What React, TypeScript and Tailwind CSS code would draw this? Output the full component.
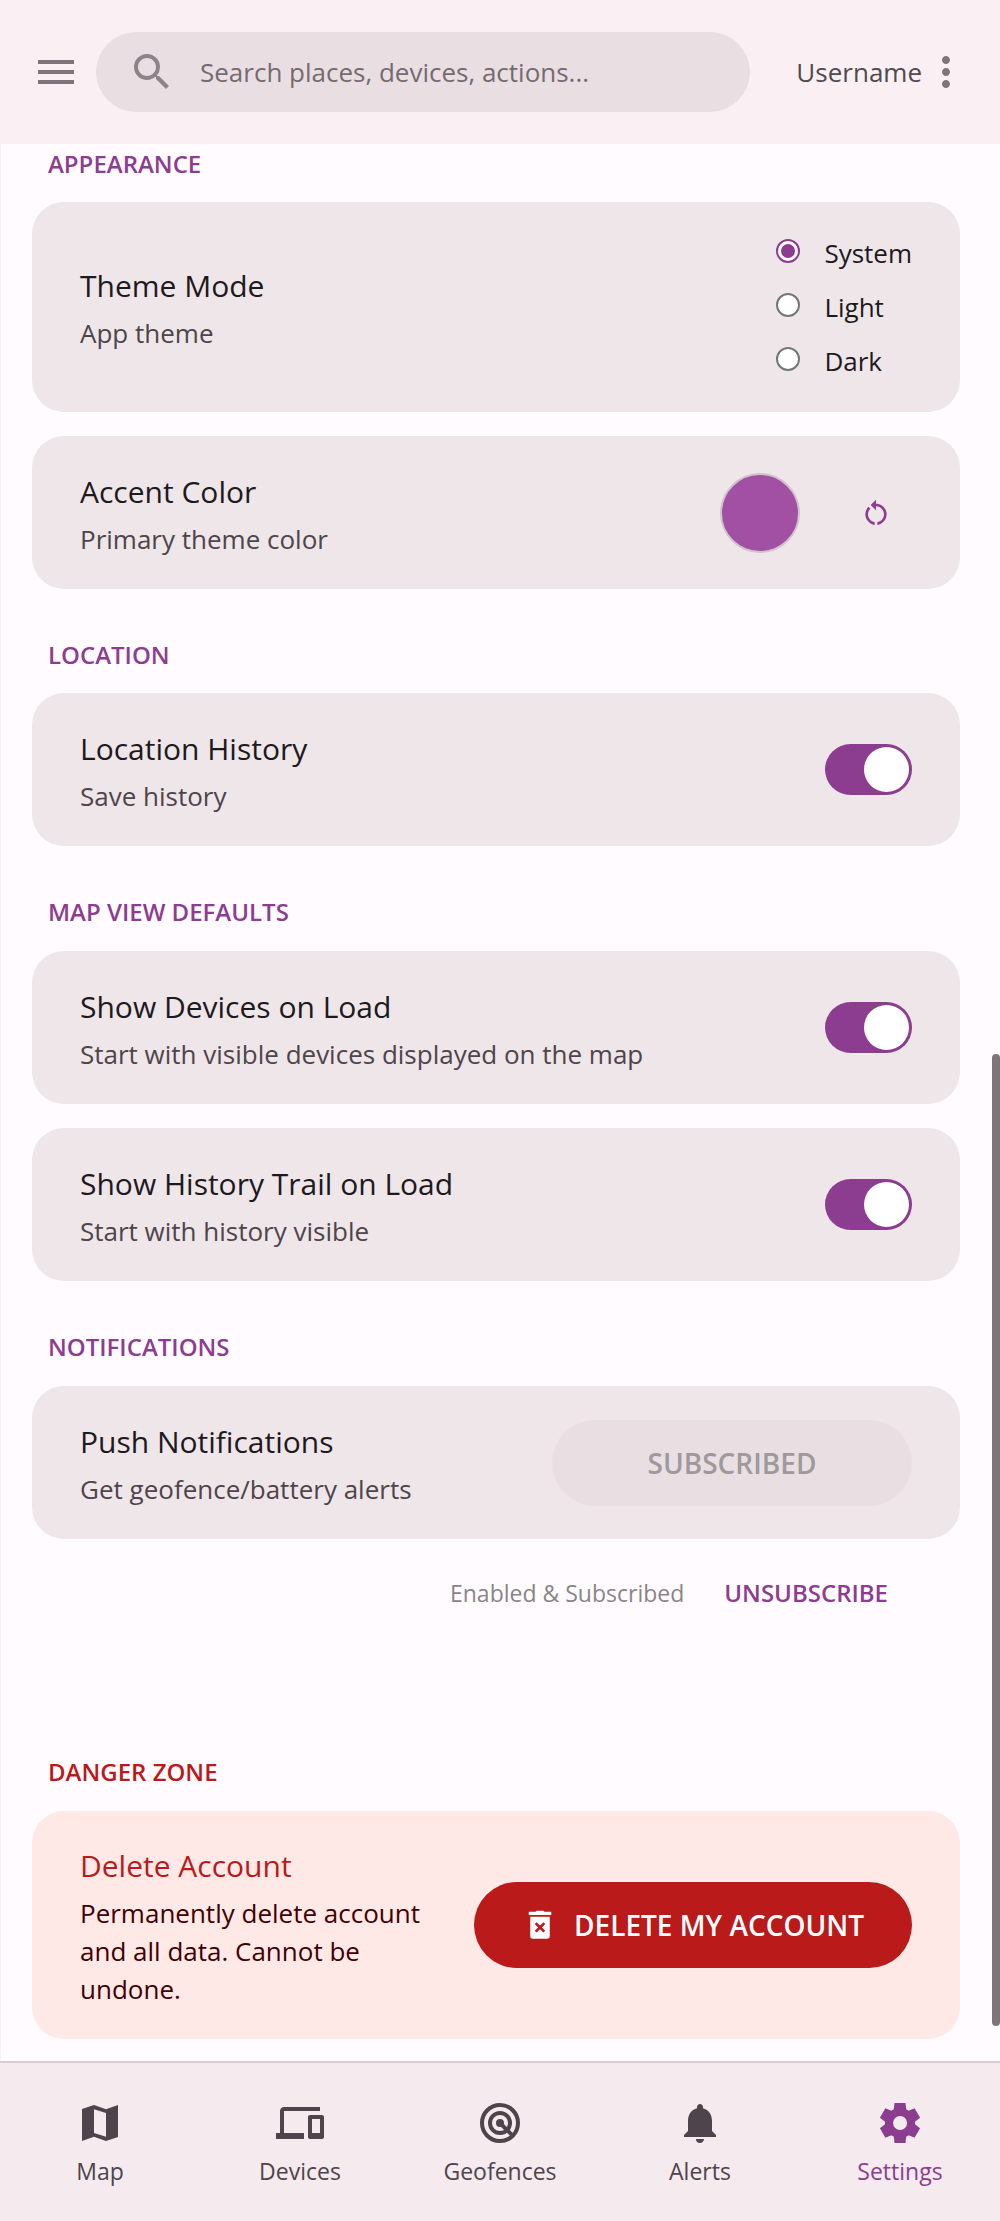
import { useState } from "react";
import type { ReactNode } from "react";
import { MdMenu, MdSearch, MdMoreVert, MdRestartAlt, MdDevices, MdNotifications } from "react-icons/md";

type IconProps = { className?: string };

function MapIcon({ className }: IconProps) {
  return (
    <svg viewBox="0 0 24 24" className={className} fill="currentColor" aria-hidden="true">
      <path fillRule="evenodd" d="M3 21V5l6-2 6 2.100L21 3v16l-6 2-6-2.100zM15 18.900V7L9 5.100V17z" />
    </svg>
  );
}

function GeofenceIcon({ className }: IconProps) {
  return (
    <svg viewBox="0 0 24 24" className={className} fill="none" stroke="currentColor" strokeWidth="2" aria-hidden="true">
      <circle cx="12" cy="12" r="9" />
      <circle cx="12" cy="12" r="5" />
      <circle cx="12" cy="12" r="2" fill="currentColor" stroke="none" />
      <path d="m12 12 6.400 6.400" />
    </svg>
  );
}

function GearIcon({ className }: IconProps) {
  return (
    <svg viewBox="0 0 24 24" className={className} fill="currentColor" aria-hidden="true">
      <path
        fillRule="evenodd"
        d="m9.250 22-.4-3.200q-.325-.125-.612-.3t-.563-.375L4.700 19.375l-2.750-4.750 2.575-1.950Q4.500 12.500 4.500 12.338v-.675q0-.163.025-.338L1.950 9.375l2.750-4.750 2.975 1.250q.275-.2.575-.375t.6-.3l.4-3.200h5.500l.4 3.200q.325.125.613.3t.562.375l2.975-1.250 2.750 4.750-2.575 1.950q.025.175.025.338v.674q0 .163-.05.338l2.575 1.950-2.750 4.750-2.950-1.250q-.275.2-.575.375t-.6.3l-.4 3.200zM12.050 15.500q1.450 0 2.475-1.025T15.550 12t-1.025-2.475T12.050 8.500q-1.475 0-2.488 1.025T8.550 12t1.012 2.475T12.050 15.500z"
      />
    </svg>
  );
}

function DeleteIcon({ className }: IconProps) {
  return (
    <svg viewBox="0 0 24 24" className={className} fill="currentColor" aria-hidden="true">
      <path d="M15 3.200 14.200 2.500H9.800L9 3.200H4.500v2.200h15V3.200z" />
      <path
        fillRule="evenodd"
        d="M5.500 6.500h13v12.800a1.800 1.800 0 0 1-1.800 1.800H7.300a1.800 1.800 0 0 1-1.800-1.800zM9.700 10.200 8.500 11.400l2.200 2.200-2.200 2.200 1.200 1.200 2.300-2.200 2.300 2.200 1.200-1.200-2.200-2.200 2.200-2.200-1.200-1.200-2.300 2.200z"
      />
    </svg>
  );
}

function SectionTitle({ children, danger = false }: { children: ReactNode; danger?: boolean }) {
  return (
    <h2
      className={`px-4 text-2xl leading-8 font-semibold uppercase ${danger ? "text-[#ba1a1a]" : "text-[#8c3d90]"}`}
    >
      {children}
    </h2>
  );
}

function Card({
  title,
  text,
  children,
  danger = false,
}: {
  title: string;
  text: string;
  children: ReactNode;
  danger?: boolean;
}) {
  return (
    <div
      className={`flex min-h-[153px] items-center justify-between gap-12 rounded-[32px] px-12 py-[31px] ${danger ? "bg-[#ffe9e7]" : "bg-[#efe6e9]"}`}
    >
      <div className="min-w-0">
        <h3 className={`text-[30px] leading-[48px] ${danger ? "text-[#ba1a1a]" : "text-[#1d1a1e]"}`}>{title}</h3>
        <p className={`mt-1 text-[26px] leading-[38px] ${danger ? "text-[#410002]" : "text-[#4e444b]"}`}>{text}</p>
      </div>
      {children}
    </div>
  );
}

function Switch({ label }: { label: string }) {
  return (
    <input
      type="checkbox"
      role="switch"
      defaultChecked
      aria-label={label}
      className="relative h-[51px] w-[87px] shrink-0 cursor-pointer appearance-none rounded-full bg-[#cfc3cb] before:absolute before:top-[3px] before:left-[3px] before:size-[45px] before:rounded-full before:bg-white checked:bg-[#8c3d90] checked:before:left-[39px]"
    />
  );
}

const themes = ["System", "Light", "Dark"];

const tabs = [
  { label: "Map", icon: MapIcon },
  { label: "Devices", icon: MdDevices },
  { label: "Geofences", icon: GeofenceIcon },
  { label: "Alerts", icon: MdNotifications },
  { label: "Settings", icon: GearIcon },
];

export default function App() {
  const [theme, setTheme] = useState("System");
  return (
    <div className="flex min-h-screen flex-col bg-[#fffbff] font-['Open_Sans','Noto_Sans',sans-serif] text-[#1d1a1e]">
      <header className="flex h-36 items-center bg-[#faf0f4] pr-[30px] pl-8 text-[#80747b]">
        <button type="button" aria-label="Menu">
          <MdMenu className="size-12" />
        </button>
        <label className="ml-4 flex h-20 min-w-0 flex-1 items-center gap-6 rounded-full bg-[#e9dfe3] px-8">
          <MdSearch className="size-12 shrink-0 text-[#8f8389]" />
          <input
            type="search"
            aria-label="Search"
            placeholder="Search places, devices, actions..."
            className="min-w-0 flex-1 bg-transparent text-[26px] outline-none placeholder:text-[#756a70]"
          />
        </label>
        <span className="ml-[46px] text-[26px] text-[#4e4a4d]">Username</span>
        <button type="button" aria-label="More options">
          <MdMoreVert className="size-12" />
        </button>
      </header>

      <main className="relative flex flex-1 flex-col border-l border-[#faf0f4] pt-1 pr-10 pb-[22px] pl-[31px]">
        <section>
          <SectionTitle>Appearance</SectionTitle>
          <div className="mt-[22px] flex flex-col gap-6">
            <Card title="Theme Mode" text="App theme">
              <div role="radiogroup" aria-label="Theme mode" className="flex flex-col gap-[14px]">
                {themes.map((name) => (
                  <label key={name} className="flex h-10 items-start gap-6 text-[26px] leading-10">
                    <input
                      type="radio"
                      name="theme"
                      checked={theme === name}
                      onChange={() => setTheme(name)}
                      className="mt-[6px] grid size-6 shrink-0 appearance-none place-content-center rounded-full border-2 border-[#767676] bg-white before:size-[14px] before:rounded-full checked:border-[#8c3d90] checked:before:bg-[#8c3d90]"
                    />
                    {name}
                  </label>
                ))}
              </div>
            </Card>
            <Card title="Accent Color" text="Primary theme color">
              <div className="flex items-center gap-[52px] pr-3">
                <button
                  type="button"
                  aria-label="Choose accent color"
                  className="size-20 rounded-full border-2 border-[#d0c3cc] bg-[#a150a3]"
                />
                <button
                  type="button"
                  aria-label="Reset accent color"
                  className="flex size-12 items-center justify-center text-[#8c3d90]"
                >
                  <MdRestartAlt className="size-8" />
                </button>
              </div>
            </Card>
          </div>
        </section>

        <section className="mt-[50px]">
          <SectionTitle>Location</SectionTitle>
          <div className="mt-[22px]">
            <Card title="Location History" text="Save history">
              <Switch label="Location History" />
            </Card>
          </div>
        </section>

        <section className="mt-[50px]">
          <SectionTitle>Map View Defaults</SectionTitle>
          <div className="mt-[23px] flex flex-col gap-6">
            <Card title="Show Devices on Load" text="Start with visible devices displayed on the map">
              <Switch label="Show Devices on Load" />
            </Card>
            <Card title="Show History Trail on Load" text="Start with history visible">
              <Switch label="Show History Trail on Load" />
            </Card>
          </div>
        </section>

        <section className="mt-[50px]">
          <SectionTitle>Notifications</SectionTitle>
          <div className="mt-[23px]">
            <Card title="Push Notifications" text="Get geofence/battery alerts">
              <button
                type="button"
                disabled
                className="h-[86px] w-[360px] rounded-full bg-[#e9dfe3] text-[28px] font-semibold text-[#9f999c] uppercase"
              >
                Subscribed
              </button>
            </Card>
          </div>
          <div className="mt-6 flex h-[60px] items-center justify-end gap-10 pr-[72px]">
            <span className="text-[23px] text-[#8a8488]">Enabled &amp; Subscribed</span>
            <button type="button" className="text-2xl font-semibold text-[#8c3d90] uppercase">
              Unsubscribe
            </button>
          </div>
        </section>

        <section className="mt-[133px]">
          <SectionTitle danger>Danger Zone</SectionTitle>
          <div className="mt-[23px]">
            <Card danger title="Delete Account" text="Permanently delete account and all data. Cannot be undone.">
              <button
                type="button"
                className="flex h-[86px] shrink-0 items-center justify-center gap-4 rounded-full bg-[#ba1a1a] px-12 text-[28px] font-semibold whitespace-nowrap text-white uppercase"
              >
                <DeleteIcon className="size-9" />
                Delete My Account
              </button>
            </Card>
          </div>
        </section>
        <div className="absolute top-[910px] right-0 bottom-[35px] w-2 rounded-full bg-[#80747b]" aria-hidden="true" />
      </main>

      <nav className="grid h-40 grid-cols-5 border-t-2 border-[#d8cad2] bg-[#f5eaee] pt-[2px]">
        {tabs.map(({ label, icon: Icon }) => (
          <a
            key={label}
            href={`#${label.toLowerCase()}`}
            className={`flex flex-col items-center justify-center text-[23px] leading-8 ${label === "Settings" ? "text-[#8c3d90]" : "text-[#4e444b]"}`}
          >
            <Icon className="mb-2 size-12" />
            {label}
          </a>
        ))}
      </nav>
    </div>
  );
}
